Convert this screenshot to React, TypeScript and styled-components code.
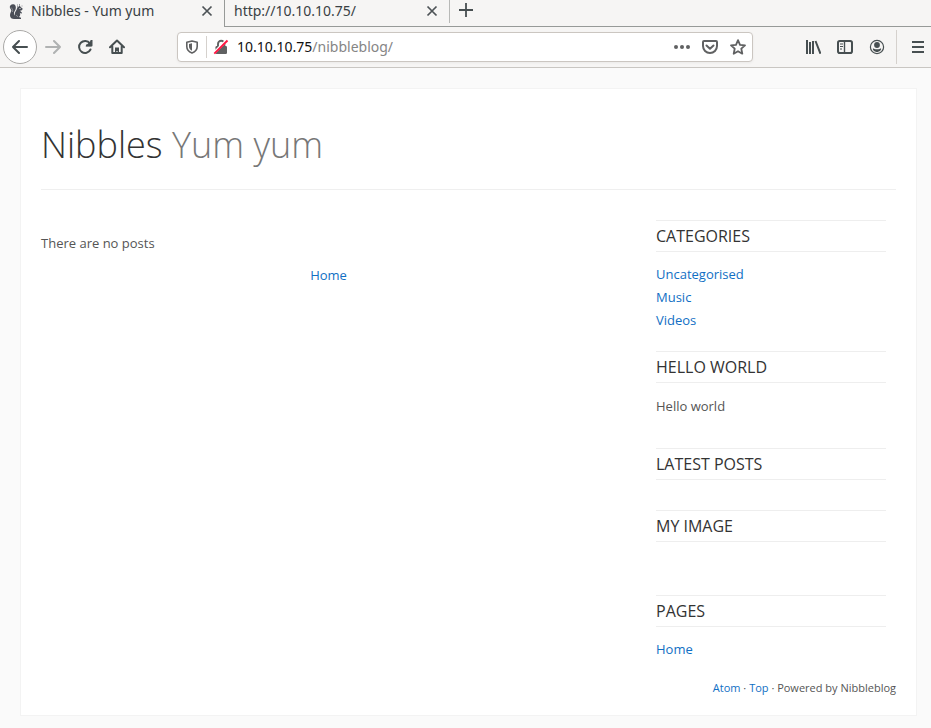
import React from "react";
import styled, { createGlobalStyle } from "styled-components";

const GlobalStyle = createGlobalStyle`
  * { box-sizing: border-box; }
  body { margin: 0; background: #fafafa; font-family: "Open Sans", sans-serif; font-size: 13px; color: #555; }
  svg { display: block; flex: none; }
`;

/* Browser window */

const TabStrip = styled.div`
  display: flex;
  height: 27px;
  background: #f6f5f4;
  font-family: "Noto Sans", sans-serif;
  color: #3a4144;
`;

const Tab = styled.div<{ $active?: boolean }>`
  display: flex;
  align-items: center;
  width: ${(p) => (p.$active ? 224 : 225)}px;
  padding: 0 8px;
  padding-bottom: ${(p) => (p.$active ? 5 : 4)}px;
  border: 0 solid #979a98;
  border-width: ${(p) => (p.$active ? "0" : "0 0 1px 1px")};
`;

const TabTitle = styled.span<{ $afterIcon?: boolean }>`
  flex: 1;
  padding-left: ${(p) => (p.$afterIcon ? 7 : 1)}px;
  line-height: 22px;
  white-space: nowrap;
  font-size: 14px;
`;

const IconButton = styled.button`
  display: flex;
  align-items: center;
  justify-content: center;
  flex: none;
  width: 32px;
  height: 30px;
  padding: 0;
  border: 0;
  background: none;
  color: #474f51;
  &:disabled { color: #b0b2b2; }
`;

const CloseButton = styled(IconButton)`
  width: 18px;
  height: 22px;
`;

const StripRest = styled.div`
  flex: 1;
  border-bottom: 1px solid #979a98;
`;

const NewTabButton = styled(IconButton)`
  height: 23px;
  padding-bottom: 3px;
  border-left: 1px solid #b8b9b7;
`;

const MenuButton = styled(IconButton)`
  width: 35px;
  height: 34px;
  margin-left: 3px;
  padding-left: 8px;
  border-left: 1px solid #d5d1cd;
`;

const Toolbar = styled.div`
  display: flex;
  align-items: center;
  height: 41px;
  padding-left: 3px;
  background: #f6f5f4;
  border-bottom: 1px solid #c9c6c2;
`;

const BackButton = styled(IconButton)`
  width: 34px;
  height: 34px;
  border: 1px solid #aaa9a7;
  border-radius: 50%;
  background: #fff;
`;

const AddressBar = styled.div`
  display: flex;
  align-items: center;
  flex: 1;
  height: 30px;
  margin: 0 44px;
  border: 1px solid #cbc6c1;
  border-radius: 4px;
  background: #fff;
  box-shadow: 0 1px 3px #0000000d;
`;

const Divider = styled.span`
  width: 1px;
  height: 22px;
  background: #d5d1cd;
`;

const Address = styled.div`
  flex: 1;
  padding-left: 2px;
  font: 14px/24px "Noto Sans", sans-serif;
  color: #858585;
  white-space: nowrap;
`;

const Host = styled.span`
  color: #111;
`;

const BarButton = styled(IconButton)`
  width: 28px;
  height: 28px;
  color: #606162;
`;

/* Blog page */

const Sheet = styled.div`
  margin: 20px 14px 11px 20px;
  padding: 0 20px 19px;
  border: 1px solid #f3f3f3;
  background: #fff;
`;

const Header = styled.header`
  padding: 29px 0 18px;
  border-bottom: 1px solid #efefef;
`;

const BlogName = styled.h1`
  margin: 0;
  font-size: 36px;
  line-height: 53px;
  font-weight: 300;
  color: #333;
`;

const Slogan = styled.span`
  color: #777;
`;

const Columns = styled.div`
  display: grid;
  grid-template-columns: minmax(0, 1fr) 230px;
  gap: 40px;
  padding: 30px 10px 0 0;
`;

const Posts = styled.main`
  line-height: 22px;
`;

const Notice = styled.p`
  margin: 12px 0 10px;
`;

const Pager = styled.nav`
  text-align: center;
`;

const Link = styled.a`
  color: #116fc4;
  text-decoration: none;
`;

const Widget = styled.section`
  display: flow-root;
  margin-bottom: 20px;
`;

const WidgetTitle = styled.h2`
  margin: 0 0 10px;
  border: 1px solid #eee;
  border-width: 1px 0;
  font-size: 16px;
  line-height: 30px;
  font-weight: 400;
  text-transform: uppercase;
  color: #333;
`;

const LinkList = styled.ul`
  margin: 0 0 -1px;
  padding: 1px 0 0;
  list-style: none;
  line-height: 23px;
`;

const WidgetText = styled.p`
  margin: 0;
  padding: 2px 0 10px;
  line-height: 23px;
`;

const ImageSlot = styled.div`
  height: 23px;
`;

const Footer = styled.footer`
  font-size: 11px;
  line-height: 16px;
  text-align: right;
`;

const CloseIcon = () => (
  <svg width="12" height="12" viewBox="0 0 12 12" fill="none" stroke="#4d5356" strokeWidth="1.7">
    <path d="M1.5 1.5l9 9M10.5 1.5l-9 9" />
  </svg>
);

const SquirrelIcon = () => (
  <svg width="16" height="17" viewBox="0 0 16 17" fill="#4b4e57">
    <path d="M5.5 1.2C3.500.8 1.500 2.400 1.800 4.300c.2 1.400 1.500 2 1.500 3.200C3.300 8.800 2 10 2 12.200 2 15 4 16 6 16h7v-1.300l-2-.7c1.500-1.300 1.400-3 .7-4.300l1.600 1 .7-1-2-1.900c2-.3 2.700-1.300 2.600-2.400L12.500 4l-.7-2-1.300 2-1-1.500-.1 2.200c-.7 1-.7 2.300-1.700 3.500-.9 1-1.200 2.800-.6 4.300C5.800 11.800 5.600 9.500 6.700 8c1-1.400 1.400-3.200 1-4.500C7.500 2.300 6.800 1.400 5.500 1.200z" />
    <path d="M11 1h1v1h-1zM13.500 2.500h1v1h-1zM9 1.500h1v1H9z" opacity=".55" />
    <circle cx="12" cy="5.500" r=".6" fill="#fff" />
    <path d="M3.200 4.500c1 1.500 2 2.500 1.200 4.500M8 12.500c1-.2 1.500.5 1.500 1.500" fill="none" stroke="#b8b9bb" strokeWidth=".6" />
  </svg>
);

const ArrowIcon = ({ flip = false }: { flip?: boolean }) => (
  <svg width="16" height="16" viewBox="0 0 16 16" fill="none" stroke="currentColor" strokeWidth="2" strokeLinecap="round" strokeLinejoin="round">
    <path d={flip ? "M1 8h14M9 2l6 6-6 6" : "M15 8H1M7 2L1 8l6 6"} />
  </svg>
);

const ReloadIcon = () => (
  <svg width="16" height="16" viewBox="0 0 16 16" fill="none" stroke="currentColor" strokeWidth="2">
    <path d="M12.900 4.300A6 6 0 1 0 13.500 10.500" strokeLinecap="round" />
    <path d="M14.300 1.200v6H8.300" strokeWidth="0" fill="currentColor" />
    <path d="M14.500 1v5.500H9" strokeLinejoin="round" />
  </svg>
);

const HomeIcon = () => (
  <svg width="16" height="16" viewBox="0 0 16 16" fill="none" stroke="currentColor" strokeWidth="2" strokeLinecap="round" strokeLinejoin="round">
    <path d="M1 8.200L8 1.500l7 6.700M3.300 7.500V14h9.400V7.500" />
    <path d="M6 14V8.500h4V14H8.600v-2H7.400v2z" fill="currentColor" stroke="none" />
  </svg>
);

const ShieldIcon = () => (
  <svg width="14" height="14" viewBox="0 0 14 14">
    <path d="M7 1l5.200 1.200V6.500c0 3-2.200 5.300-5.200 6.500-3-1.200-5.200-3.500-5.200-6.500V2.200z" fill="none" stroke="currentColor" strokeWidth="1.600" strokeLinejoin="round" />
    <path d="M7 3.300L4 4v2.500c0 1.900 1.200 3.300 3 4.200z" fill="currentColor" />
  </svg>
);

const InsecureIcon = () => (
  <svg width="16" height="16" viewBox="0 0 16 16">
    <path d="M5 8V5a3.200 3.200 0 0 1 6.400 0v3" fill="none" stroke="#606162" strokeWidth="1.900" />
    <rect x="2.500" y="7" width="11.500" height="8" rx="1.200" fill="#606162" />
    <path d="M.9 14.100L13.900 1.100" stroke="#fff" strokeWidth="2.800" />
    <path d="M1.300 14.700L14.500 1.500" stroke="#ff1541" strokeWidth="1.900" />
  </svg>
);

const DotsIcon = () => (
  <svg width="16" height="6" viewBox="0 0 16 6" fill="currentColor">
    <circle cx="2" cy="3" r="2" /><circle cx="8" cy="3" r="2" /><circle cx="14" cy="3" r="2" />
  </svg>
);

const PocketIcon = () => (
  <svg width="16" height="16" viewBox="0 0 16 16" fill="none" stroke="currentColor" strokeWidth="2" strokeLinejoin="round">
    <path d="M2 2h12a1 1 0 0 1 1 1v4a7 7 0 0 1-14 0V3a1 1 0 0 1 1-1z" />
    <path d="M4.500 6.500L8 9.800l3.500-3.300" strokeLinecap="round" />
  </svg>
);

const StarIcon = () => (
  <svg width="16" height="16" viewBox="0 0 16 16" fill="none" stroke="currentColor" strokeWidth="1.800" strokeLinejoin="round">
    <path d="M8 1.200l2 4.600 5 .5-3.700 3.400 1 5L8 12.200l-4.300 2.500 1-5L1 6.300l5-.5z" />
  </svg>
);

const LibraryIcon = () => (
  <svg width="16" height="14" viewBox="0 0 16 14" fill="none" stroke="currentColor" strokeWidth="2">
    <path d="M2 0v14M5 2v12M8 1v13M10.500 1l5 12.800" />
  </svg>
);

const SidebarIcon = () => (
  <svg width="16" height="14" viewBox="0 0 16 14" fill="none" stroke="currentColor">
    <rect x="1" y="1" width="14" height="12" rx="1.800" strokeWidth="2" />
    <path d="M7.500 1v12" strokeWidth="1.400" />
    <path d="M3 4h3M3 6.500h3M3 9h2" strokeWidth="1" />
  </svg>
);

const AccountIcon = () => (
  <svg width="16" height="16" viewBox="0 0 16 16" fill="currentColor">
    <circle cx="8" cy="8" r="6.600" fill="none" stroke="currentColor" strokeWidth="1.200" />
    <circle cx="8" cy="6" r="2.900" />
    <path d="M4 9.500c1 0 1.500.8 4 .8s3-.8 4-.8c.8 1-1.500 3.500-4 3.500S3.200 10.500 4 9.500z" />
  </svg>
);

const MenuIcon = () => (
  <svg width="12" height="12" viewBox="0 0 12 12" stroke="currentColor" strokeWidth="2">
    <path d="M0 1h12M0 6h12M0 11h12" />
  </svg>
);

const PlusIcon = () => (
  <svg width="14" height="14" viewBox="0 0 14 14" stroke="currentColor" strokeWidth="1.800">
    <path d="M0 7h14M7 0v14" />
  </svg>
);

const LinkItems = ({ names }: { names: string[] }) => (
  <LinkList>
    {names.map((name) => (
      <li key={name}><Link href="#">{name}</Link></li>
    ))}
  </LinkList>
);

const SidebarWidget = ({ title, children }: { title: string; children?: React.ReactNode }) => (
  <Widget>
    <WidgetTitle>{title}</WidgetTitle>
    {children}
  </Widget>
);

export default function App() {
  return (
    <>
      <GlobalStyle />
      <TabStrip>
        <Tab $active>
          <SquirrelIcon />
          <TabTitle $afterIcon>Nibbles - Yum yum</TabTitle>
          <CloseButton aria-label="Close tab"><CloseIcon /></CloseButton>
        </Tab>
        <Tab>
          <TabTitle>http://10.10.10.75/</TabTitle>
          <CloseButton aria-label="Close tab"><CloseIcon /></CloseButton>
        </Tab>
        <StripRest>
          <NewTabButton aria-label="New tab"><PlusIcon /></NewTabButton>
        </StripRest>
      </TabStrip>
      <Toolbar>
        <BackButton aria-label="Back"><ArrowIcon /></BackButton>
        <IconButton aria-label="Forward" disabled><ArrowIcon flip /></IconButton>
        <IconButton aria-label="Reload"><ReloadIcon /></IconButton>
        <IconButton aria-label="Home"><HomeIcon /></IconButton>
        <AddressBar>
          <BarButton aria-label="Tracking protection"><ShieldIcon /></BarButton>
          <Divider />
          <BarButton aria-label="Connection not secure"><InsecureIcon /></BarButton>
          <Address><Host>10.10.10.75</Host>/nibbleblog/</Address>
          <BarButton aria-label="Page actions"><DotsIcon /></BarButton>
          <BarButton aria-label="Save to Pocket"><PocketIcon /></BarButton>
          <BarButton aria-label="Bookmark"><StarIcon /></BarButton>
        </AddressBar>
        <IconButton aria-label="Library"><LibraryIcon /></IconButton>
        <IconButton aria-label="Sidebars"><SidebarIcon /></IconButton>
        <IconButton aria-label="Account"><AccountIcon /></IconButton>
        <MenuButton aria-label="Menu"><MenuIcon /></MenuButton>
      </Toolbar>
      <Sheet>
        <Header>
          <BlogName>Nibbles <Slogan>Yum yum</Slogan></BlogName>
        </Header>
        <Columns>
          <Posts>
            <Notice>There are no posts</Notice>
            <Pager><Link href="#">Home</Link></Pager>
          </Posts>
          <aside>
            <SidebarWidget title="Categories">
              <LinkItems names={["Uncategorised", "Music", "Videos"]} />
            </SidebarWidget>
            <SidebarWidget title="Hello world">
              <WidgetText>Hello world</WidgetText>
            </SidebarWidget>
            <SidebarWidget title="Latest posts" />
            <SidebarWidget title="My image"><ImageSlot /></SidebarWidget>
            <SidebarWidget title="Pages">
              <LinkItems names={["Home"]} />
            </SidebarWidget>
          </aside>
        </Columns>
        <Footer>
          <Link href="#">Atom</Link> · <Link href="#">Top</Link> · Powered by Nibbleblog
        </Footer>
      </Sheet>
    </>
  );
}
